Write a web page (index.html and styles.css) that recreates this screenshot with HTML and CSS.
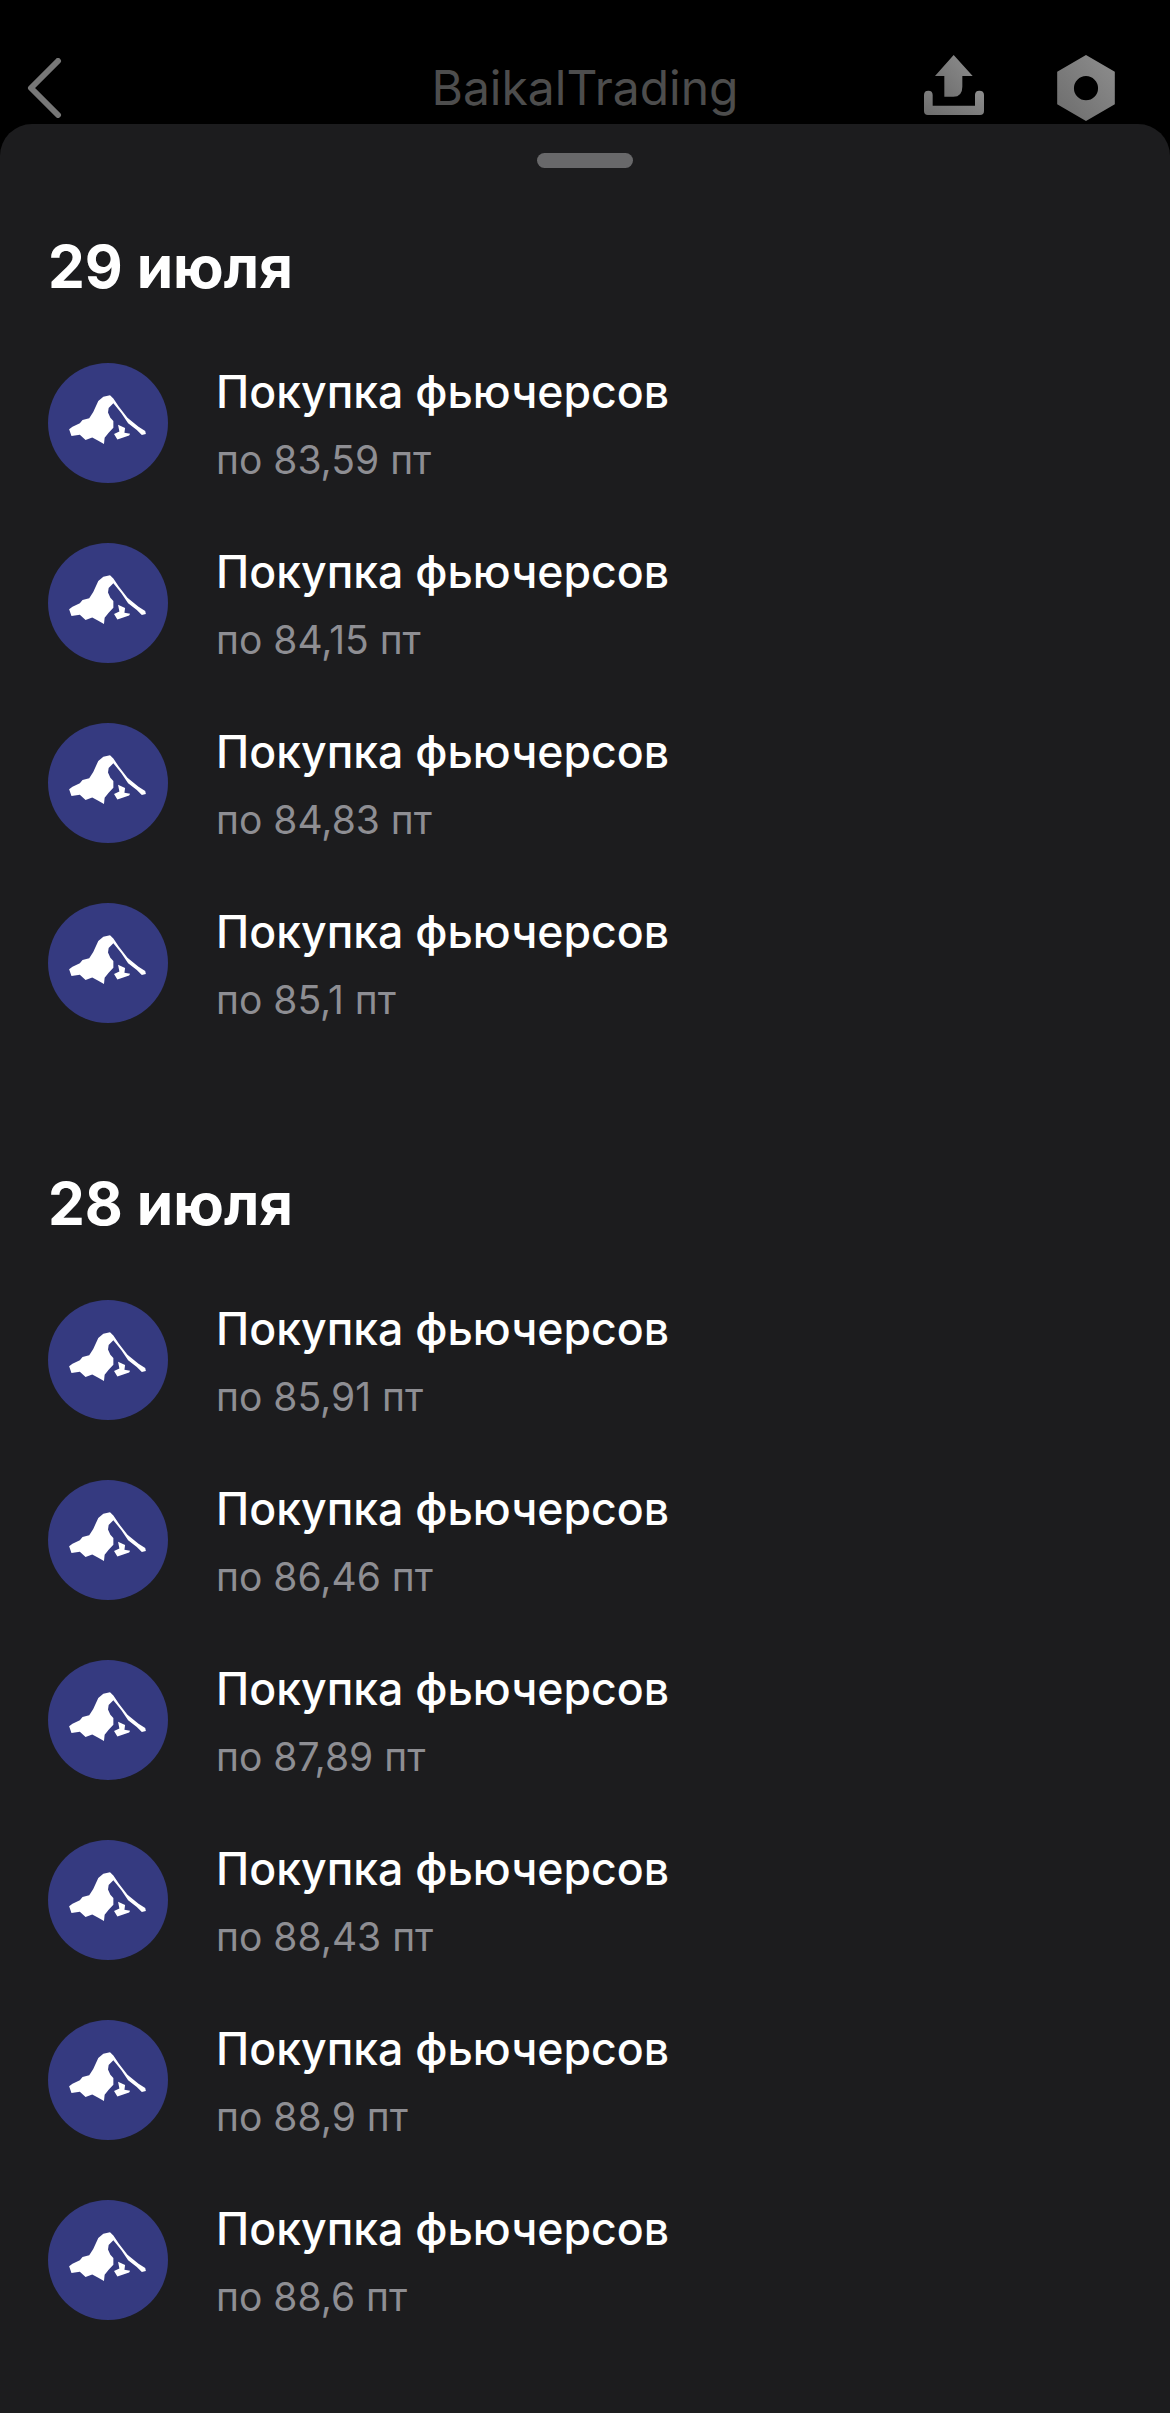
FILE: index.html
```html
<!DOCTYPE html>
<html>
  <head>
    <title>BaikalTrading</title>
    <meta charset="utf-8"/>
    <link rel="stylesheet" href="styles.css">
  </head>
  <body>
    <svg class="defs" width="0" height="0">
      <defs>
        <linearGradient id="icon-grad" x1="1" y1="0" x2="0" y2="1">
          <stop offset="0" stop-color="#8e8e8e"/>
          <stop offset="1" stop-color="#6c6c6c"/>
        </linearGradient>
        <symbol id="logo" viewBox="55 42 358 358">
          <circle cx="234" cy="221" r="179" fill="#353a80"/>
          <path fill="#fff" d="M118 240 L128 232 L150 222 L158 212 L178 207 L190 188 L205 155 L220 143 L240 138 L250 148 L266 172 L292 205 L325 232 L345 245 L347 254 L335 257 L320 242 L294 222 L274 192 L250 162 L236 176 L234 190 L241 205 L250 215 L250 235 L236 250 L224 265 L222 284 L205 274 L187 264 L167 272 L150 256 L125 260 Z"/>
          <path fill="#fff" d="M264 226 L285 236 L283 250 L300 253 L297 258 L262 270 L252 254 L268 246 Z"/>
        </symbol>
      </defs>
    </svg>

    <header class="topbar">
      <div class="topbar-left">
        <svg class="back" width="36" height="60" viewBox="0 0 36 60">
          <path d="M31 3 L4 30 L31 57" fill="none" stroke="#777" stroke-width="6" stroke-linecap="round" stroke-linejoin="round"/>
        </svg>
      </div>
      <div class="topbar-title">BaikalTrading</div>
      <div class="topbar-right">
        <svg width="60" height="60" viewBox="72 45 180 180">
          <path fill="url(#icon-grad)" d="M161 45 L218 108 L187 108 L187 140 Q187 170 160 170 L133 170 L133 108 L105 108 Z"/>
          <path fill="url(#icon-grad)" d="M72 165 Q72 152 85 152 Q98 152 98 165 L98 197 L225 197 L225 165 Q225 152 238 152 Q252 152 252 165 L252 213 Q252 225 240 225 L84 225 Q72 225 72 213 Z"/>
        </svg>
        <svg width="58" height="66" viewBox="472 45 172 197">
          <path fill="url(#icon-grad)" fill-rule="evenodd" d="M558 45 L644 95 L644 192 L558 242 L472 192 L472 95 Z M558 108 A36 36 0 1 0 558 180 A36 36 0 1 0 558 108 Z"/>
        </svg>
      </div>
    </header>

    <main class="sheet">
      <div class="handle"></div>

      <section class="day">
        <h1>29 июля</h1>
        <ul class="trades">
          <li><svg class="logo"><use href="#logo"/></svg><div class="trade-text"><h2>Покупка фьючерсов</h2><p>по 83,59 пт</p></div></li>
          <li><svg class="logo"><use href="#logo"/></svg><div class="trade-text"><h2>Покупка фьючерсов</h2><p>по 84,15 пт</p></div></li>
          <li><svg class="logo"><use href="#logo"/></svg><div class="trade-text"><h2>Покупка фьючерсов</h2><p>по 84,83 пт</p></div></li>
          <li><svg class="logo"><use href="#logo"/></svg><div class="trade-text"><h2>Покупка фьючерсов</h2><p>по 85,1 пт</p></div></li>
        </ul>
      </section>

      <section class="day">
        <h1>28 июля</h1>
        <ul class="trades">
          <li><svg class="logo"><use href="#logo"/></svg><div class="trade-text"><h2>Покупка фьючерсов</h2><p>по 85,91 пт</p></div></li>
          <li><svg class="logo"><use href="#logo"/></svg><div class="trade-text"><h2>Покупка фьючерсов</h2><p>по 86,46 пт</p></div></li>
          <li><svg class="logo"><use href="#logo"/></svg><div class="trade-text"><h2>Покупка фьючерсов</h2><p>по 87,89 пт</p></div></li>
          <li><svg class="logo"><use href="#logo"/></svg><div class="trade-text"><h2>Покупка фьючерсов</h2><p>по 88,43 пт</p></div></li>
          <li><svg class="logo"><use href="#logo"/></svg><div class="trade-text"><h2>Покупка фьючерсов</h2><p>по 88,9 пт</p></div></li>
          <li><svg class="logo"><use href="#logo"/></svg><div class="trade-text"><h2>Покупка фьючерсов</h2><p>по 88,6 пт</p></div></li>
        </ul>
      </section>
    </main>
  </body>
</html>
```

FILE: styles.css
```css
html, body {
  margin: 0;
  height: 2413px;
  overflow: hidden;
  background: #000;
  font-family: Inter, "Noto Sans", sans-serif;
}
.defs {
  display: block;
  height: 0;
}
.topbar {
  height: 124px;
  box-sizing: border-box;
  padding: 55px 55px 0;
  display: grid;
  grid-template-columns: 1fr auto 1fr;
  align-items: start;
}
.topbar-left {
  padding-top: 3px;
  margin-left: -28px;
}
.back {
  display: block;
}
.topbar-title {
  color: #4d4d4d;
  font-size: 48px;
  line-height: 66px;
}
.topbar-right {
  display: flex;
  justify-content: flex-end;
  gap: 73px;
}
.sheet {
  height: 2289px;
  box-sizing: border-box;
  background: #1c1c1e;
  border-radius: 32px 32px 0 0;
  padding: 29px 48px 0;
}
.handle {
  width: 96px;
  height: 15px;
  margin: 0 auto;
  border-radius: 8px;
  background: #68686a;
}
.day {
  margin-bottom: 82px;
}
h1 {
  margin: 0 0 62px;
  padding-top: 65px;
  color: #fff;
  font-size: 58.5px;
  font-weight: 700;
  line-height: 68px;
}
.trades {
  list-style: none;
  margin: 0;
  padding: 0;
  display: flex;
  flex-direction: column;
  gap: 60px;
}
.trades li {
  display: flex;
  align-items: center;
  gap: 48px;
  height: 120px;
}
.logo {
  width: 120px;
  height: 120px;
  flex: none;
}
.trade-text {
  padding-top: 6px;
}
h2 {
  margin: 0;
  color: #fff;
  font-size: 44.6px;
  font-weight: 550;
  line-height: 56px;
}
p {
  margin: 12px 0 0;
  color: #8e8e93;
  font-size: 39px;
  line-height: 56px;
}
```
